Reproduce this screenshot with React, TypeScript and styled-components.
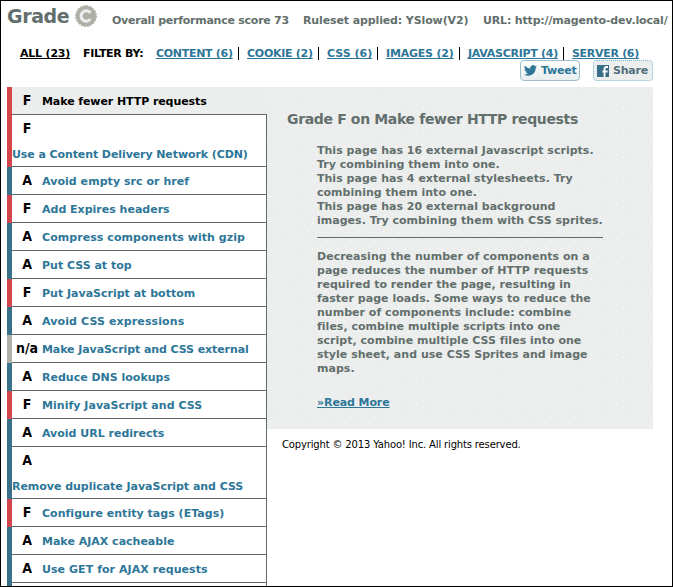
import React from "react";
import styled, { createGlobalStyle } from "styled-components";

const Global = createGlobalStyle`
  *, *::before, *::after { box-sizing: border-box; }
  html, body { margin: 0; padding: 0; overflow: hidden; background: #fff; }
  body { font-family: "DejaVu Sans", Verdana, sans-serif; font-size: 11px; font-weight: 700; color: #636f6c; }
`;

const Frame = styled.div`
  width: 673px;
  height: 587px;
  overflow: hidden;
  border: 1px solid #000;
  padding-left: 6px;
  background: #fff;
`;

const Header = styled.header`
  display: flex;
  height: 33px;
  white-space: nowrap;
`;

const Title = styled.h1`
  margin: 0;
  width: 68px;
  font-size: 19px;
  line-height: 30px;
  letter-spacing: -0.4px;
`;

const Badge = styled.svg`
  flex: none;
  width: 24px;
  height: 24px;
  margin: 3px 14px 0 -1px;
`;

const HeaderItem = styled.span<{ $width: number; $track: number }>`
  flex: none;
  width: ${(p) => p.$width}px;
  line-height: 14px;
  padding-top: 13px;
  letter-spacing: ${(p) => p.$track}px;
`;

const Filters = styled.nav`
  display: flex;
  height: 26px;
  padding: 13px 0 0 13px;
  line-height: 13px;
  white-space: nowrap;
`;

const FilterCell = styled.span<{ $width: number; $track?: number; $divided?: boolean }>`
  flex: none;
  width: ${(p) => p.$width}px;
  height: 13px;
  border-right: ${(p) => (p.$divided ? "1px solid #000" : "none")};
  color: #000;
  letter-spacing: ${(p) => p.$track ?? 0}px;
`;

const Link = styled.a<{ $dark?: boolean }>`
  color: ${(p) => (p.$dark ? "#000" : "#2d7698")};
  text-decoration: underline;
  text-underline-offset: 1px;
  text-decoration-thickness: 1px;
  text-decoration-skip-ink: none;
`;

const Social = styled.div`
  display: flex;
  justify-content: flex-end;
  gap: 13px;
  height: 27px;
  padding-right: 19px;
`;

const SocialButton = styled.button<{ $raised?: boolean }>`
  display: flex;
  align-items: center;
  gap: 4px;
  width: 60px;
  height: 21px;
  padding: 0 0 0 3px;
  border: 1px ${(p) => (p.$raised ? "solid #9cbfca" : "dotted #79bdd3")};
  border-radius: 4px;
  background: ${(p) => (p.$raised ? "linear-gradient(#fff, #e9eded)" : "#ebeeed")};
  color: ${(p) => (p.$raised ? "#2d7698" : "#536f7b")};
  font: 700 11px/14px "DejaVu Sans", sans-serif;
  letter-spacing: -0.2px;
  svg { flex: none; }
`;

const speck = (x: number, y: number) =>
  `radial-gradient(circle at ${x + 0.5}px ${y + 0.5}px, #fff 0.7px, transparent 0.7px)`;

const specks = [
  [2, 3], [10, 1], [18, 4],
  [5, 11], [13, 9], [22, 12],
  [1, 19], [9, 17], [16, 20],
];

const Panel = styled.main`
  display: flex;
  width: 646px;
  height: 342px;
  background-color: #ebeeed;
  background-image: ${specks.map(([x, y]) => speck(x, y)).join(", ")};
  background-size: 25px 25px;
`;

const List = styled.ul`
  flex: none;
  width: 260px;
  margin: 0;
  padding: 0;
  list-style: none;
`;

const tones = { F: "#d3454b", A: "#39718b", "n/a": "#b0afa6" };
type Grade = keyof typeof tones;

const Row = styled.li<{ $grade: Grade; $wide?: boolean; $active?: boolean }>`
  display: flex;
  flex-wrap: wrap;
  align-content: flex-start;
  height: ${(p) => (p.$wide ? 52 : 28)}px;
  border-left: 5px solid ${(p) => tones[p.$grade]};
  box-shadow: inset 0 -1px #5f6a68${(p) => (p.$active ? "" : ", inset -1px 0 #5f6a68")};
  background: ${(p) => (p.$active ? "#ebeeed" : "#fff")};
  color: ${(p) => (p.$active ? "#000" : "#2d7698")};
  white-space: nowrap;
`;

const GradeMark = styled.span<{ $alone?: boolean }>`
  width: ${(p) => (p.$alone ? "100%" : "30px")};
  padding-right: ${(p) => (p.$alone ? "225px" : "0")};
  text-align: center;
  color: #000;
  font-family: "DejaVu Sans Condensed", "DejaVu Sans", sans-serif;
  font-stretch: condensed;
  font-size: 14px;
  line-height: 27px;
`;

const RowLabel = styled.span<{ $below?: boolean; $track?: number }>`
  line-height: ${(p) => (p.$below ? 26 : 30)}px;
  letter-spacing: ${(p) => p.$track ?? 0}px;
`;

const Detail = styled.section`
  flex: 1;
  padding: 23px 0 0 20px;
`;

const DetailTitle = styled.h2`
  margin: 0 0 17px;
  font-size: 14px;
  line-height: 18px;
  letter-spacing: -0.35px;
  white-space: nowrap;
`;

const DetailBody = styled.div`
  width: 286px;
  margin: -1px 0 0 30px;
  line-height: 14px;
  letter-spacing: 0.02px;
  font-variant-ligatures: common-ligatures;
  white-space: pre;
`;

const Rule = styled.hr`
  height: 1px;
  margin: 9px 0 12px;
  border: 0;
  background: #5f6a68;
`;

const More = styled.p`
  margin: 20px 0 0;
  letter-spacing: -0.1px;
`;

const Copyright = styled.footer`
  padding: 10px 0 0 275px;
  font-size: 10px;
  font-weight: 400;
  line-height: 12px;
  letter-spacing: -0.155px;
  color: #000;
  white-space: nowrap;
`;

const rows: { grade: Grade; label: string; wide?: boolean; track?: number }[] = [
  { grade: "F", label: "Make fewer HTTP requests", track: -0.08 },
  { grade: "F", label: "Use a Content Delivery Network (CDN)", wide: true, track: -0.09 },
  { grade: "A", label: "Avoid empty src or href", track: 0.05 },
  { grade: "F", label: "Add Expires headers" },
  { grade: "A", label: "Compress components with gzip", track: 0.06 },
  { grade: "A", label: "Put CSS at top" },
  { grade: "F", label: "Put JavaScript at bottom" },
  { grade: "A", label: "Avoid CSS expressions", track: 0.12 },
  { grade: "n/a", label: "Make JavaScript and CSS external", track: -0.09 },
  { grade: "A", label: "Reduce DNS lookups" },
  { grade: "F", label: "Minify JavaScript and CSS", track: 0.03 },
  { grade: "A", label: "Avoid URL redirects" },
  { grade: "A", label: "Remove duplicate JavaScript and CSS", wide: true, track: -0.03 },
  { grade: "F", label: "Configure entity tags (ETags)", track: 0.03 },
  { grade: "A", label: "Make AJAX cacheable" },
  { grade: "A", label: "Use GET for AJAX requests", track: 0.06 },
  { grade: "A", label: "" },
];

const filters = [
  { label: "CONTENT (6)", width: 83, track: -0.29 },
  { label: "COOKIE (2)", width: 72, track: -0.27 },
  { label: "CSS (6)", width: 51, track: 0 },
  { label: "IMAGES (2)", width: 74, track: -0.2 },
  { label: "JAVASCRIPT (4)", width: 96, track: -0.28 },
  { label: "SERVER (6)", width: 80, track: -0.3 },
];

const findings = `This page has 16 external Javascript scripts.
Try combining them into one.
This page has 4 external stylesheets. Try
combining them into one.
This page has 20 external background
images. Try combining them with CSS sprites.`;

const advice = `Decreasing the number of components on a
page reduces the number of HTTP requests
required to render the page, resulting in
faster page loads. Some ways to reduce the
number of components include: combine
files, combine multiple scripts into one
script, combine multiple CSS files into one
style sheet, and use CSS Sprites and image
maps.`;

export default function App() {
  return (
    <>
      <Global />
      <Frame>
        <Header>
          <Title>Grade</Title>
          <Badge viewBox="0 0 24 24">
            <circle cx="12" cy="12" r="10.3" fill="#b0afa6" />
            <circle cx="12" cy="12" r="10.5" fill="none" stroke="#b0afa6" strokeWidth="1" strokeDasharray="2 1.3" />
            <path d="M16.4 8.8A5.200 5.200 0 1 0 16.400 15.200" fill="none" stroke="#eceeed" strokeWidth="3" />
          </Badge>
          <HeaderItem $width={191} $track={-0.25}>Overall performance score 73</HeaderItem>
          <HeaderItem $width={180} $track={-0.12}>Ruleset applied: YSlow(V2)</HeaderItem>
          <HeaderItem $width={185} $track={-0.17}>URL: http://magento-dev.local/</HeaderItem>
        </Header>
        <Filters>
          <FilterCell $width={63} $track={-0.2}><Link $dark>ALL (23)</Link></FilterCell>
          <FilterCell $width={73} $track={-0.3}>FILTER BY:</FilterCell>
          {filters.map((f, i) => (
            <React.Fragment key={f.label}>
              {i > 0 && <FilterCell $width={8} />}
              <FilterCell $width={f.width} $track={f.track} $divided={i < filters.length - 1}>
                <Link>{f.label}</Link>
              </FilterCell>
            </React.Fragment>
          ))}
        </Filters>
        <Social>
          <SocialButton $raised>
            <svg width="13" height="11" viewBox="0 0 24 20" fill="#2d7698">
              <path d="M24 2.4a10 10 0 0 1-2.8.8A5 5 0 0 0 23.3.5a10 10 0 0 1-3.1 1.2 4.9 4.9 0 0 0-8.4 4.5A14 14 0 0 1 1.7 1a4.9 4.9 0 0 0 1.5 6.6 5 5 0 0 1-2.2-.6 5 5 0 0 0 3.9 4.9 5 5 0 0 1-2.2.1 5 5 0 0 0 4.6 3.4A10 10 0 0 1 0 17.4 14 14 0 0 0 21.5 5 10 10 0 0 0 24 2.4z" />
            </svg>
            Tweet
          </SocialButton>
          <SocialButton>
            <svg width="12" height="12" viewBox="0 0 12 12">
              <rect width="12" height="12" fill="#386e88" />
              <path d="M11 2H9.7Q7.5 2 7.5 4.2V12M5.5 6.500H10.500" fill="none" stroke="#fff" strokeWidth="1.8" />
            </svg>
            Share
          </SocialButton>
        </Social>
        <Panel>
          <List>
            {rows.map((r, i) => (
              <Row key={i} $grade={r.grade} $wide={r.wide} $active={i === 0}>
                <GradeMark $alone={r.wide}>{r.label ? r.grade : ""}</GradeMark>
                <RowLabel $below={r.wide} $track={r.track}>{r.label}</RowLabel>
              </Row>
            ))}
          </List>
          <Detail>
            <DetailTitle>Grade F on Make fewer HTTP requests</DetailTitle>
            <DetailBody>
              {findings}
              <Rule />
              {advice}
              <More><Link>»Read More</Link></More>
            </DetailBody>
          </Detail>
        </Panel>
        <Copyright>Copyright © 2013 Yahoo! Inc. All rights reserved.</Copyright>
      </Frame>
    </>
  );
}
